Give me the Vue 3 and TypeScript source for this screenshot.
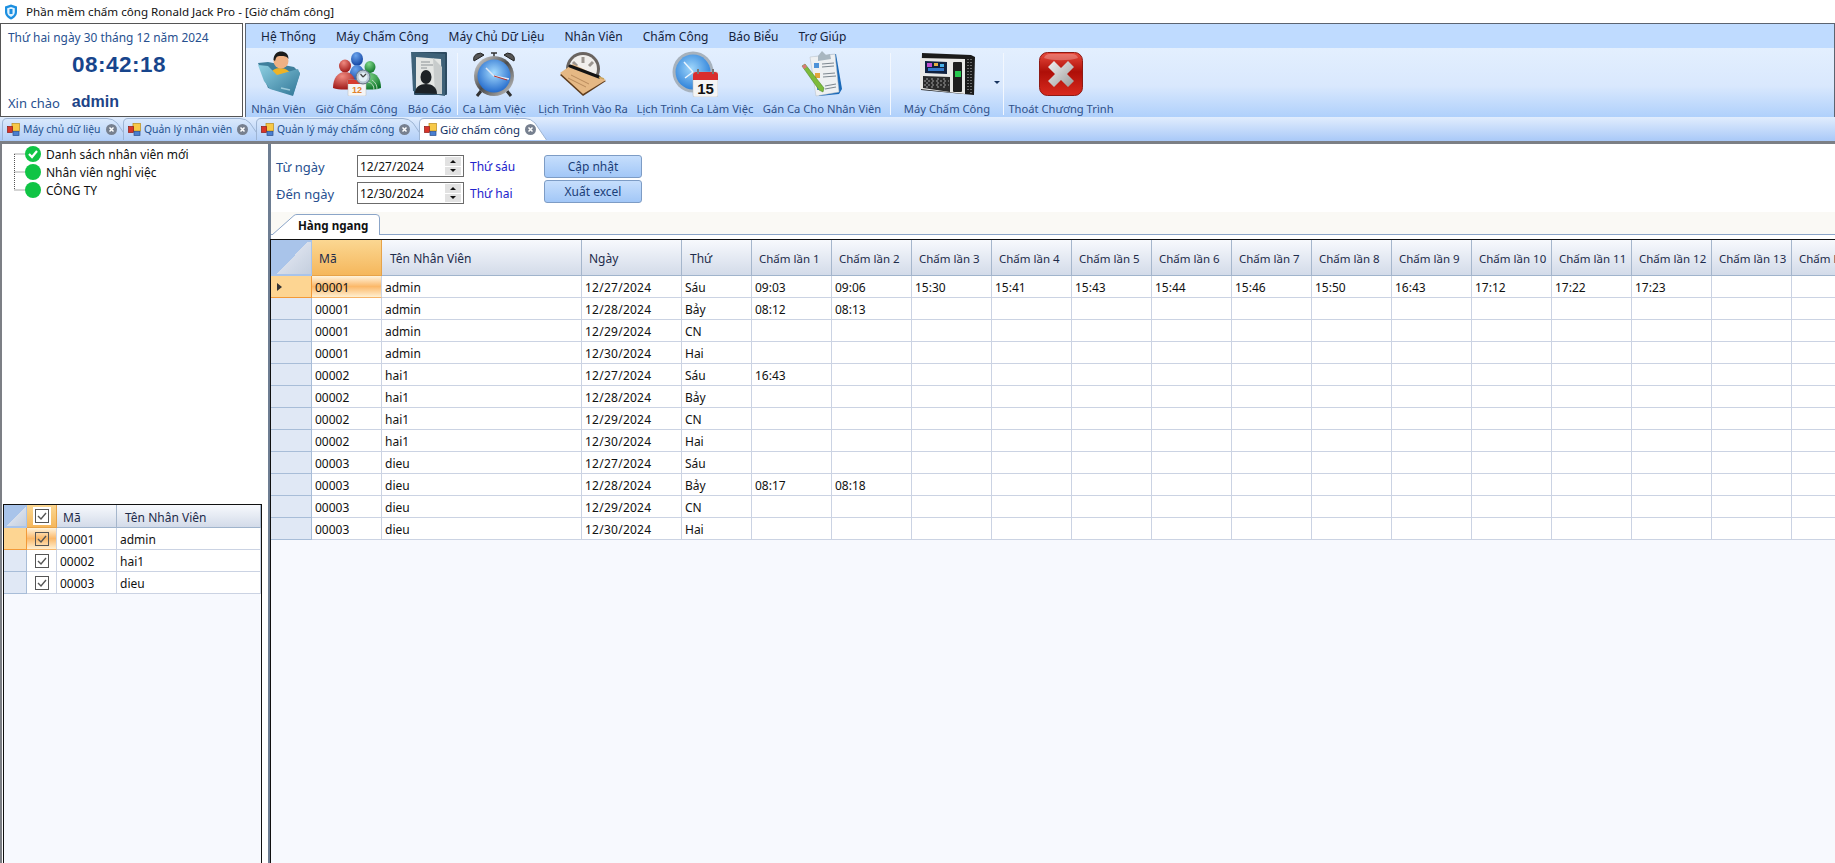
<script setup lang="ts">
interface Tool { label: string; icon: string; width: number; sep?: boolean; arrow?: boolean }
const menus: string[] = ['Hệ Thống', 'Máy Chấm Công', 'Máy Chủ Dữ Liệu', 'Nhân Viên', 'Chấm Công', 'Báo Biểu', 'Trợ Giúp']
const tools: Tool[] = [
  { label: 'Nhân Viên', icon: 'staff', width: 59 },
  { label: 'Giờ Chấm Công', icon: 'group', width: 97 },
  { label: 'Báo Cáo', icon: 'report', width: 49, sep: true },
  { label: 'Ca Làm Việc', icon: 'alarm', width: 72 },
  { label: 'Lịch Trình Vào Ra', icon: 'note', width: 106 },
  { label: 'Lịch Trình Ca Làm Việc', icon: 'cal', width: 118 },
  { label: 'Gán Ca Cho Nhân Viên', icon: 'clip', width: 136, sep: true },
  { label: 'Máy Chấm Công', icon: 'device', width: 112, sep: true, arrow: true },
  { label: 'Thoát Chương Trình', icon: 'exit', width: 114 }
]
const tabs = [
  { label: 'Máy chủ dữ liệu', width: 121, extra: 6 },
  { label: 'Quản lý nhân viên', width: 133, extra: 6 },
  { label: 'Quản lý máy chấm công', width: 163, extra: 6 },
  { label: 'Giờ chấm công', width: 128, extra: 0, active: true }
]
function tabPath(w: number): string {
  return `M0.5 23 L0.5 6 Q0.5 1.5 5 1.5 L${w - 22} 1.5 Q${w - 16} 1.5 ${w - 12} 6 L${w - 0.5} 23`
}
const chamCols: string[] = Array.from({ length: 14 }, (_, i) => `Chấm lần ${i + 1}`)
interface Row { ma: string; ten: string; ngay: string; thu: string; t: string[] }
const days = [['12/27/2024', 'Sáu'], ['12/28/2024', 'Bảy'], ['12/29/2024', 'CN'], ['12/30/2024', 'Hai']]
const staff = [['00001', 'admin'], ['00002', 'hai1'], ['00003', 'dieu']]
const times: Record<string, string[]> = {
  '0-0': ['09:03', '09:06', '15:30', '15:41', '15:43', '15:44', '15:46', '15:50', '16:43', '17:12', '17:22', '17:23'],
  '0-1': ['08:12', '08:13'],
  '1-0': ['16:43'],
  '2-1': ['08:17', '08:18']
}
const rows: Row[] = []
staff.forEach((s, si) => days.forEach((d, di) => {
  const src = times[`${si}-${di}`] ?? []
  rows.push({ ma: s[0], ten: s[1], ngay: d[0], thu: d[1], t: Array.from({ length: 14 }, (_, i) => src[i] ?? '') })
}))
const tree: string[] = ['Danh sách nhân viên mới', 'Nhân viên nghỉ việc', 'CÔNG TY']
</script>

<template>
  <div class="app">
    <div class="title">
      <svg class="logo" width="14" height="16" viewBox="0 0 14 16">
        <path d="M7 .5 13 2.5V8c0 3.5-2.6 6-6 7.5C3.6 14 1 11.500 1 8V2.500Z" fill="#1c8fe0" />
        <path d="M7 3 10.800 4.300V8c0 2.200-1.600 3.900-3.800 5C4.800 11.900 3.200 10.200 3.200 8V4.300Z" fill="#dff2ff" />
        <rect x="5.500" y="5" width="3" height="5" fill="#1c8fe0" />
      </svg>
      <span>Phần mềm chấm công Ronald Jack Pro - [Giờ chấm công]</span>
    </div>

    <div class="head">
      <div class="clock">
        <div class="date">Thứ hai ngày 30 tháng 12 năm 2024</div>
        <div class="time">08:42:18</div>
        <div class="hello"><span>Xin chào</span><b>admin</b></div>
      </div>
      <div class="ribbon">
        <div class="menu"><span v-for="m in menus" :key="m">{{ m }}</span></div>
        <div class="tools">
          <template v-for="t in tools" :key="t.label">
            <div class="tool" :style="{ width: t.width + 'px' }">
              <div class="ico">
                <svg v-if="t.icon === 'staff'" width="46" height="46" viewBox="0 0 46 46">
                  <defs><linearGradient id="f1" x1="0" y1="0" x2="1" y2="1"><stop offset="0" stop-color="#8fd0e2" /><stop offset="1" stop-color="#2f7596" /></linearGradient></defs>
                  <path d="M2 12 12 11 38 16 44 22 37 44 12 37Z" fill="#3f7f9c" />
                  <path d="M13 26c1-6 6-9 11-9s11 3 12 9l-5 5H17Z" fill="#efb326" />
                  <circle cx="25" cy="10" r="7.500" fill="#f0b184" />
                  <path d="M17.500 9c0-6 4-8.500 7.500-8.500 4 0 7.500 2 7.500 7.500-2-3-4-3-7.500-3-2 0-4 0-5 2l-1 3Z" fill="#1b1b1b" />
                  <path d="M2 14 12 15 21 24 42 18 44 23 37 45 14 38 8 30Z" fill="url(#f1)" />
                  <path d="M25 37 34 39" stroke="#bfe4ee" stroke-width="1.500" opacity=".7" />
                </svg>
                <svg v-else-if="t.icon === 'group'" width="50" height="44" viewBox="0 0 50 44">
                  <defs>
                    <radialGradient id="rd" cx=".4" cy=".25" r=".8"><stop offset="0" stop-color="#f08a80" /><stop offset="1" stop-color="#9a1212" /></radialGradient>
                    <radialGradient id="bl" cx=".4" cy=".25" r=".8"><stop offset="0" stop-color="#6aa4ee" /><stop offset="1" stop-color="#0c3d9c" /></radialGradient>
                    <radialGradient id="gr" cx=".4" cy=".25" r=".8"><stop offset="0" stop-color="#7fd88a" /><stop offset="1" stop-color="#0a7024" /></radialGradient>
                  </defs>
                  <ellipse cx="25" cy="7" rx="6" ry="7" fill="url(#bl)" />
                  <path d="M17 30c0-12 3-17 8-17s8 5 8 17Z" fill="url(#bl)" />
                  <ellipse cx="13" cy="14" rx="6" ry="6.500" fill="url(#rd)" />
                  <path d="M1 36c0-10 5-16 12-16s11 6 11 16c-6 2-17 2-23 0Z" fill="url(#rd)" />
                  <ellipse cx="38" cy="15" rx="5.500" ry="6" fill="url(#gr)" />
                  <path d="M27 36c0-9 4-15 11-15s11 6 11 15c-6 2-16 2-22 0Z" fill="url(#gr)" />
                  <path d="M36 30a8 8 0 0 1 6 8M40 28a11 11 0 0 1 5 10" stroke="#b7d8bd" fill="none" />
                  <rect x="16" y="28" width="18" height="16" rx="1" fill="#f5f5f5" stroke="#bbb" stroke-width=".5" />
                  <rect x="16" y="28" width="18" height="4" fill="#d63b2e" />
                  <text x="25" y="41" text-anchor="middle" class="svgnum s9" fill="#e0822a">12</text>
                  <circle cx="31" cy="25" r="7" fill="#b9c6d2" stroke="#5e7488" />
                  <circle cx="31" cy="25" r="4.500" fill="#e4f0f7" />
                  <path d="M31 25 28.500 22M31 25 34 22" stroke="#444" stroke-width="1.200" />
                </svg>
                <svg v-else-if="t.icon === 'report'" width="38" height="46" viewBox="0 0 38 46">
                  <rect x="3" y="1" width="33" height="43" rx="1" fill="#2c4a60" />
                  <path d="M0 1 4 1 34 3 34 45 2 40Z" fill="#3e6178" />
                  <path d="M5 6 30 8 31 43 5 40Z" fill="#e4e6e4" />
                  <path d="M22 7 31 16 31 43 24 43Z" fill="#c8cccc" />
                  <path d="M10 11h9M10 14h12M10 17h6" stroke="#8c9296" />
                  <ellipse cx="15" cy="26" rx="5.500" ry="7" fill="#1d2226" />
                  <path d="M4 42c0-6 5-9 11-9s11 3 11 10Z" fill="#1d2226" />
                </svg>
                <svg v-else-if="t.icon === 'alarm'" width="46" height="46" viewBox="0 0 46 46">
                  <defs>
                    <radialGradient id="ff" cx=".5" cy=".4" r=".65"><stop offset="0" stop-color="#a6dcff" /><stop offset="1" stop-color="#1a62c8" /></radialGradient>
                    <linearGradient id="ch" x1="0" y1="0" x2="1" y2="1"><stop offset="0" stop-color="#e4e4e4" /><stop offset=".5" stop-color="#4c4c4c" /><stop offset="1" stop-color="#cfcfcf" /></linearGradient>
                  </defs>
                  <path d="M3 10a6 6 0 0 1 10-6ZM43 10a6 6 0 0 0-10-6Z" fill="#555" stroke="#222" />
                  <path d="M23 2v4M20 2h6" stroke="#333" stroke-width="1.500" />
                  <path d="M10 40 6 45M36 40l4 5" stroke="#333" stroke-width="3" />
                  <circle cx="23" cy="25" r="20" fill="url(#ch)" />
                  <circle cx="23" cy="25" r="16.500" fill="url(#ff)" />
                  <path d="M23 25 15 17M23 25 38 28" stroke="#dfe8f5" stroke-width="1.500" />
                  <path d="M23 25 36 29" stroke="#b8322a" />
                </svg>
                <svg v-else-if="t.icon === 'note'" width="48" height="46" viewBox="0 0 48 46">
                  <circle cx="24" cy="18" r="17" fill="#6a6460" />
                  <circle cx="24" cy="18" r="14" fill="#f1efec" />
                  <path d="M24 6v6M14 11l4 4M34 11l-4 4M10 20h5" stroke="#9c9690" stroke-width="3" />
                  <path d="M1 24 14 14 47 30 24 45Z" fill="#5d3b1c" />
                  <path d="M1 22 14 13 47 29 24 43Z" fill="#e5b884" />
                  <path d="M12 24l18 9M9 27l18 9" stroke="#b98b5d" />
                  <path d="M11 15 40 26" stroke="#141414" stroke-width="3" stroke-linecap="round" />
                  <path d="M40 26 45 28" stroke="#c9a35a" stroke-width="1.500" />
                </svg>
                <svg v-else-if="t.icon === 'cal'" width="46" height="46" viewBox="0 0 46 46">
                  <defs><radialGradient id="fc" cx=".45" cy=".4" r=".7"><stop offset="0" stop-color="#9fd6fb" /><stop offset="1" stop-color="#1c74d4" /></radialGradient></defs>
                  <circle cx="21" cy="21" r="20.500" fill="#a7b2bd" />
                  <circle cx="21" cy="21" r="17.500" fill="url(#fc)" />
                  <path d="M21 21 12 11M21 21 13 27" stroke="#eaf4fd" stroke-width="1.500" />
                  <rect x="21" y="21" width="25" height="25" rx="2" fill="#f4f4f4" stroke="#bbb" stroke-width=".5" />
                  <path d="M21 24a3 3 0 0 1 3-3h19a3 3 0 0 1 3 3v5H21Z" fill="#d92e2e" />
                  <path d="M26 18v5M41 18v5" stroke="#777" stroke-width="2" />
                  <text x="33.500" y="43" text-anchor="middle" class="svgnum s15" fill="#111">15</text>
                </svg>
                <svg v-else-if="t.icon === 'clip'" width="42" height="46" viewBox="0 0 42 46">
                  <path d="M13 6 35 3 41 38 38 43 18 45Z" fill="#1a69b8" />
                  <path d="M9 6 34 3 38 41 15 45Z" fill="#eef0f2" stroke="#b6bcc2" stroke-width=".5" />
                  <path d="M17 5 21 0 25 4 29 3 30 8 17 10Z" fill="#a8b6c0" />
                  <rect x="13" y="12" width="5" height="5" fill="#4d92d8" />
                  <rect x="14" y="22" width="5" height="5" fill="#e2a53c" />
                  <rect x="16" y="34" width="5" height="5" fill="#4d92d8" />
                  <path d="M21 13l12-1M21 16l12-1M22 23l12-1M22 26l13-1M24 35l11-2M24 38l11-2" stroke="#7e8890" stroke-width="1.200" />
                  <path d="M1 15 4 13 23 37 22 41 18 39Z" fill="#7dbb3a" stroke="#3f7a22" stroke-width=".5" />
                  <path d="M1 15 4 13 6 16 3 18Z" fill="#d87a78" />
                </svg>
                <svg v-else-if="t.icon === 'device'" width="56" height="44" viewBox="0 0 56 44">
                  <path d="M3 1 52 3 56 5 55 43 2 38Z" fill="#1b1b1b" />
                  <path d="M1 6 46 7 46 42 1 37Z" fill="#e9e9e7" />
                  <path d="M6 9 28 10 28 22 6 21Z" fill="#10213f" />
                  <rect x="8" y="11" width="5" height="4" fill="#c24ecf" /><rect x="15" y="11" width="4" height="3" fill="#e6b040" /><rect x="21" y="12" width="4" height="3" fill="#48b0e8" />
                  <rect x="9" y="16" width="16" height="3" fill="#3578c8" />
                  <path d="M4 24 31 25 31 40 4 36Z" fill="#2a2a2a" />
                  <path d="M8 26v10M13 26v11M19 26v12M25 26v12M5 29h25M5 33h25" stroke="#a0a0a0" stroke-dasharray="2 2" />
                  <rect x="34" y="10" width="9" height="30" rx="1" fill="#1e1e1e" />
                  <rect x="36" y="19" width="6" height="6" fill="#26c94e" />
                  <path d="M49 7v33M52 7v34" stroke="#bdbdbd" stroke-dasharray="1 2" />
                </svg>
                <svg v-else-if="t.icon === 'exit'" width="44" height="44" viewBox="0 0 44 44">
                  <defs>
                    <linearGradient id="rb" x1="0" y1="0" x2="0" y2="1"><stop offset="0" stop-color="#e84a3c" /><stop offset=".45" stop-color="#ae0f08" /><stop offset="1" stop-color="#d92a1e" /></linearGradient>
                    <linearGradient id="xg" x1="0" y1="0" x2="1" y2="1"><stop offset="0" stop-color="#f2f2f2" /><stop offset="1" stop-color="#999" /></linearGradient>
                  </defs>
                  <rect x=".5" y=".5" width="43" height="43" rx="8" fill="url(#rb)" stroke="#8e1a14" />
                  <path d="M5 6c1-3 3-4 6-4h22c3 0 5 1 6 4-8 3-26 3-34 0Z" fill="#fff" opacity=".25" />
                  <path d="M15 9 22 16 29 9 35 15 28 22 35 29 29 35 22 28 15 35 9 29 16 22 9 15Z" fill="url(#xg)" />
                </svg>
              </div>
              <div class="tlabel">{{ t.label }}</div>
              <i v-if="t.arrow" class="arrow"></i>
            </div>
            <div v-if="t.sep" class="sep" :class="{ wide: t.label === 'Báo Cáo' }"></div>
          </template>
        </div>
      </div>
    </div>

    <div class="tabs">
      <div v-for="t in tabs" :key="t.label" class="tab" :class="{ active: t.active }" :style="{ width: t.width + 'px' }">
        <svg class="tabbg" :width="t.width + t.extra" height="24">
          <path :d="tabPath(t.width + t.extra)" :fill="t.active ? '#ffffff' : 'url(#tabfill)'" stroke="#9db4d3" />
          <defs><linearGradient id="tabfill" x1="0" y1="0" x2="0" y2="1"><stop offset="0" stop-color="#dae9fc" /><stop offset="1" stop-color="#b4d0f8" /></linearGradient></defs>
        </svg>
        <svg class="tabicon" width="13" height="13" viewBox="0 0 13 13">
          <rect x="5" y="0.500" width="7.500" height="7.500" fill="#f7c948" stroke="#b98b1a" stroke-width=".7" />
          <rect x="0.500" y="3.500" width="5" height="6" fill="#d8352a" stroke="#8e1a14" stroke-width=".7" />
          <rect x="6" y="8.500" width="6" height="4" fill="#4a7fd0" stroke="#2a4f8c" stroke-width=".7" />
        </svg>
        <span class="tabtext">{{ t.label }}</span>
        <svg class="tabclose" width="11" height="11" viewBox="0 0 11 11">
          <circle cx="5.500" cy="5.500" r="5.500" fill="#77808f" />
          <path d="M3.500 3.500 7.500 7.500M7.500 3.500 3.500 7.500" stroke="#fff" stroke-width="1.500" />
        </svg>
      </div>
    </div>
    <div class="rule"></div>

    <div class="body">
      <div class="left">
        <div class="tree">
          <svg class="treelines" width="30" height="60">
            <path d="M14.500 10V46M14.500 10H25M14.500 28H25M14.500 46H25" stroke="#555" stroke-dasharray="1 1" fill="none" />
          </svg>
          <div v-for="(n, i) in tree" :key="n" class="node">
            <svg width="16" height="16" viewBox="0 0 16 16">
              <circle cx="8" cy="8" r="8" fill="#10c445" />
              <path v-if="i === 0" d="M4 8 7 11 12 5" stroke="#fff" stroke-width="2.200" fill="none" />
            </svg>
            <span>{{ n }}</span>
          </div>
        </div>
        <div class="lgrid">
          <div class="lrow lhead">
            <div class="corner small"></div>
            <div class="hc hot chk"><span class="box onwhite"><svg width="12" height="12" viewBox="0 0 12 12"><path d="M2 6 5 9 10 3" stroke="#555" stroke-width="1.400" fill="none" /></svg></span></div>
            <div class="hc pad6">Mã</div>
            <div class="hc pad8">Tên Nhân Viên</div>
          </div>
          <div v-for="(s, i) in staff" :key="s[0]" class="lrow">
            <div class="ind" :class="{ sel: i === 0 }"></div>
            <div class="c chk" :class="{ cellsel: i === 0 }"><span class="box"><svg width="12" height="12" viewBox="0 0 12 12"><path d="M2 6 5 9 10 3" stroke="#555" stroke-width="1.400" fill="none" /></svg></span></div>
            <div class="c">{{ s[0] }}</div>
            <div class="c">{{ s[1] }}</div>
          </div>
        </div>
      </div>
      <div class="gap"></div>
      <div class="right">
        <div class="form">
          <div class="dates">
            <div class="drow">
              <label>Từ ngày</label>
              <div class="dinput"><span>12/27/2024</span><div class="spin"><i class="up"></i><i class="down"></i></div></div>
              <span class="day">Thứ sáu</span>
            </div>
            <div class="drow">
              <label>Đến ngày</label>
              <div class="dinput"><span>12/30/2024</span><div class="spin"><i class="up"></i><i class="down"></i></div></div>
              <span class="day">Thứ hai</span>
            </div>
          </div>
          <div class="btns">
            <button>Cập nhật</button>
            <button>Xuất excel</button>
          </div>
        </div>
        <div class="strip">
          <div class="gtab">
            <svg class="gtabbg" width="110" height="21">
              <path d="M1 21 23 1.500 Q24 0.500 26 0.500 L105 0.500 Q108.500 0.500 108.500 4 L108.500 21" fill="#fff" stroke="#8ba5c8" />
            </svg>
            <span>Hàng ngang</span>
          </div>
        </div>
        <div class="spacer"></div>
        <div class="grid">
          <div class="grow ghead">
            <div class="corner"></div>
            <div class="hc hot pad7">Mã</div>
            <div class="hc pad8">Tên Nhân Viên</div>
            <div class="hc pad7">Ngày</div>
            <div class="hc pad8">Thứ</div>
            <div v-for="c in chamCols" :key="c" class="hc cham">{{ c }}</div>
          </div>
          <div v-for="(r, i) in rows" :key="i" class="grow">
            <div class="ind" :class="{ sel: i === 0 }"><i v-if="i === 0" class="caret"></i></div>
            <div class="c" :class="{ cellsel: i === 0 }">{{ r.ma }}</div>
            <div class="c">{{ r.ten }}</div>
            <div class="c dt">{{ r.ngay }}</div>
            <div class="c">{{ r.thu }}</div>
            <div v-for="(v, j) in r.t" :key="j" class="c">{{ v }}</div>
          </div>
        </div>
      </div>
    </div>
  </div>
</template>

<style>
html, body { margin: 0; padding: 0; background: #fff; overflow: hidden; }
</style>

<style scoped>
.app { width: 1835px; height: 863px; display: flex; flex-direction: column; overflow: hidden; font-family: "Noto Sans", "Liberation Sans", sans-serif; font-size: 12px; color: #111; background: #fff; }
.title { height: 23px; display: flex; align-items: center; gap: 8px; padding-left: 4px; font-size: 11.6px; color: #111; flex: none; }
.head { display: flex; height: 94px; gap: 2px; flex: none; }
.clock { width: 243px; box-sizing: border-box; border: 1px solid #555; background: #fff; display: flex; flex-direction: column; padding: 0 0 0 7px; flex: none; }
.date { margin-top: 4px; line-height: 18px; font-size: 11.9px; color: #27508f; white-space: nowrap; }
.time { margin: 6px 0 0; padding-left: 64px; line-height: 26px; font-family: "Liberation Sans", sans-serif; font-size: 22.5px; letter-spacing: .5px; font-weight: 700; color: #17458c; }
.hello { margin-top: 15px; display: flex; align-items: center; gap: 12px; color: #27508f; font-size: 13px; line-height: 20px; }
.hello b { margin-top: -2px; font-family: "Liberation Sans", sans-serif; font-size: 16px; color: #1d4488; }
.ribbon { flex: 1; border: 1px solid #5c6470; display: flex; flex-direction: column; background: #bfdbff; }
.menu { height: 24px; display: flex; align-items: center; padding-left: 15px; gap: 20px; color: #15233c; font-size: 12px; flex: none; background: #bfdbff; }
.tools { flex: 1; display: flex; padding-left: 3px; background: linear-gradient(#e3effe, #d9e8fd 55%, #afd0fb); }
.tool { position: relative; display: flex; flex-direction: column; align-items: center; flex: none; }
.ico { height: 50px; padding-top: 2px; display: flex; align-items: center; justify-content: center; box-sizing: border-box; }
.tlabel { margin-top: 3px; line-height: 16px; font-size: 11.2px; color: #2f5088; white-space: nowrap; }
.arrow { position: absolute; right: 3px; top: 33px; border-left: 3px solid transparent; border-right: 3px solid transparent; border-top: 3px solid #17345f; }
.sep { width: 1px; margin: 5px 0 2px; background: #f2f7fe; flex: none; }
.sep.wide { margin-left: 3px; }
.tabs { height: 24px; display: flex; padding-left: 2px; flex: none; background: linear-gradient(#e1edfd, #a9c9f8); }
.tab { position: relative; height: 24px; display: flex; align-items: center; padding-left: 5px; box-sizing: border-box; flex: none; }
.tabbg { position: absolute; left: 0; top: 0; }
.tabicon { position: relative; flex: none; }
.tabtext { position: relative; margin-left: 3px; color: #24528f; white-space: nowrap; font-size: 10.4px; }
.tab.active .tabtext { color: #0f2f63; font-size: 11.4px; }
.tabclose { position: relative; margin-left: 5px; flex: none; }
.rule { height: 3px; background: #7c7f85; flex: none; }
.body { flex: 1; display: flex; min-height: 0; }
.left { width: 260px; border-left: 2px solid #7c7f85; display: flex; flex-direction: column; flex: none; }
.tree { height: 360px; position: relative; padding-top: 1px; box-sizing: border-box; flex: none; }
.treelines { position: absolute; left: -2px; top: 0; }
.node { height: 18px; display: flex; align-items: center; gap: 5px; padding-left: 23px; font-size: 12px; color: #111; }
.lgrid { flex: 1; margin-left: 1px; border: 1px solid #111; border-bottom: none; background: #f7f9fe; }
.lrow { display: grid; grid-template-columns: 23px 30px 60px 144px; height: 22px; background: #fff; }
.lrow.lhead { height: 23px; }
.gap { width: 6px; flex: none; }
.right { flex: 1; min-width: 0; border-left: 3px solid #6d7d92; display: flex; flex-direction: column; background: #f7f9fe; }
.form { height: 68px; box-sizing: border-box; padding: 11px 0 0 5px; display: flex; background: #fff; flex: none; }
.dates { display: flex; flex-direction: column; gap: 5px; }
.drow { display: flex; align-items: center; height: 22px; }
.drow label { width: 81px; padding-top: 2px; color: #27508f; font-size: 13px; }
.dinput { width: 107px; height: 22px; box-sizing: border-box; border: 1px solid #6b6b6b; background: #fff; display: flex; align-items: center; justify-content: space-between; padding: 0 1px 0 2px; font-size: 12px; color: #111; }
.spin { width: 16px; height: 18px; display: flex; flex-direction: column; gap: 1px; margin-right: 1px; }
.spin i { flex: 1; background: #e2e2e2; display: flex; align-items: center; justify-content: center; }
.spin i::after { content: ""; border-left: 3px solid transparent; border-right: 3px solid transparent; }
.spin .up::after { border-bottom: 3px solid #111; }
.spin .down::after { border-top: 3px solid #111; }
.day { width: 74px; margin-left: 6px; padding-top: 1px; color: #2222cc; font-size: 12px; }
.btns { display: flex; flex-direction: column; gap: 2px; }
.btns button { width: 98px; height: 23px; padding: 0; border: 1px solid #7d9cc5; border-radius: 3px; background: linear-gradient(#c6defc, #a2c7f7); color: #1b3e78; font: inherit; font-size: 12px; }
.strip { height: 22px; background: #faf9f5; border-bottom: 1px solid #8ba5c8; position: relative; flex: none; box-sizing: content-box; }
.gtab { position: absolute; left: 0; bottom: -1px; width: 110px; height: 21px; font-weight: 700; font-size: 11.6px; color: #111; }
.gtabbg { position: absolute; left: 0; top: 0; }
.gtab span { position: relative; display: block; padding-left: 27px; line-height: 23px; }
.spacer { height: 4px; background: #fff; flex: none; }
.grid { flex: 1; overflow: hidden; border-top: 1px solid #111; border-left: 1px solid #111; margin-left: -1px; }
.grow { display: grid; grid-template-columns: 41px 70px 200px 100px 70px repeat(14, 80px); height: 22px; width: 1601px; background: #fff; }
.grow.ghead { height: 36px; }
.hc { box-sizing: border-box; display: flex; align-items: center; padding-top: 2px; background: linear-gradient(#f7f9fd, #d3dbe9); border-right: 1px solid #a5b6cc; border-bottom: 1px solid #a0b4cc; color: #1d2b4a; white-space: nowrap; overflow: hidden; font-size: 12px; }
.hc.hot { background: linear-gradient(#fbd792, #f5b75c); border-color: #e6a34a; }
.hc.cham { padding-left: 7px; font-size: 11.5px; }
.pad6 { padding-left: 6px; }
.pad7 { padding-left: 7px; }
.pad8 { padding-left: 8px; }
.chk { justify-content: center; padding: 0; }
.hc.chk { padding: 0; }
.corner { box-sizing: border-box; border: 2px solid #a9c4ea; border-right-width: 1px; background: linear-gradient(135deg, #a9c4ea 0 50%, #d8dfeb 50%, #c4cede 100%); }
.ind { box-sizing: border-box; background: #e0e8f5; border-right: 1px solid #a8bdd8; border-bottom: 1px solid #a8bdd8; display: flex; align-items: center; padding-left: 6px; }
.ind.sel { background: #fdd592; border-color: #f39a38; }
.caret { border-left: 5px solid #333; border-top: 4px solid transparent; border-bottom: 4px solid transparent; }
.c { box-sizing: border-box; display: flex; align-items: center; padding: 2px 0 0 3px; border-right: 1px solid #cbd3e3; border-bottom: 1px solid #cbd3e3; background: #fff; font-size: 12px; color: #111; white-space: nowrap; overflow: hidden; }
.c.dt { letter-spacing: .25px; }
.c.chk { padding: 0; justify-content: center; }
.cellsel { background: linear-gradient(#fff4dd, #fbb869 50%, #fff0d2); border-bottom-color: #f7b56a; }
.box { width: 12px; height: 12px; border: 1px solid #555; display: flex; align-items: center; justify-content: center; background: transparent; }
.box.onwhite { background: #fff; outline: 2px solid #fff; }
.svgnum { font-family: "Liberation Sans", sans-serif; font-weight: 700; }
.s9 { font-size: 9px; }
.s15 { font-size: 15px; }
</style>
